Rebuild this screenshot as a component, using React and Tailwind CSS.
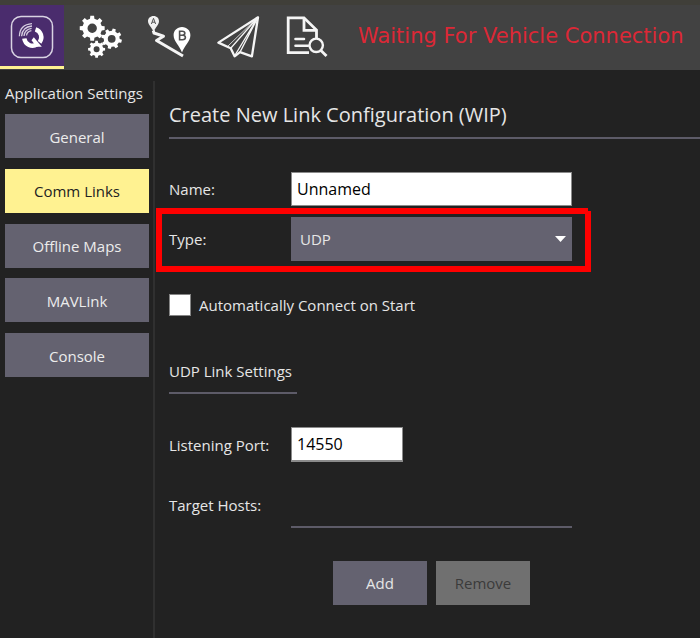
import React from 'react';

// Outline of a toothed wheel followed by its round hole (even-odd fill).
function gearPath(cx, cy, outer, root, hole, teeth, turn) {
  const step = (Math.PI * 2) / teeth;
  const pts = [];
  for (let i = 0; i < teeth; i++) {
    const a = turn + i * step;
    [[-0.29, root], [-0.19, outer], [0.19, outer], [0.29, root]].forEach(([k, r]) => {
      pts.push(`${(cx + r * Math.cos(a + k * step)).toFixed(2)} ${(cy + r * Math.sin(a + k * step)).toFixed(2)}`);
    });
  }
  return `M${pts.join('L')}Z M${cx - hole} ${cy}a${hole} ${hole} 0 1 0 ${hole * 2} 0a${hole} ${hole} 0 1 0 ${-hole * 2} 0Z`;
}

function LogoIcon() {
  return (
    <svg className="h-[44px] w-[44px]" viewBox="10 15 44 44" fill="none">
      <rect x="11.5" y="16.5" width="41" height="41" rx="9.5" stroke="#d9d3e3" strokeWidth="1.5" />
      <path d="M35.5 29.3A8.3 8.3 0 0 1 39.6 42.3M37 44.4A8.3 8.3 0 0 1 24.3 38.5" stroke="#fff" strokeWidth="4.4" />
      <path d="M33.8 37.2L41.8 46.8H36.4L31.5 40.2Z" fill="#fff" />
      <g stroke="#d5cde0" strokeWidth="1.3">
        <path d="M19.4 36.2C19.6 29 24 24.2 32 23.6" />
        <path d="M21.6 36.2C22 30.5 25.5 26.6 32 26" />
        <path d="M24 36C24.4 31.8 27 29 31.6 28.4" />
        <path d="M26.5 35.5C26.8 33 28.5 31.2 31.4 30.7" />
      </g>
    </svg>
  );
}

function GearsIcon() {
  return (
    <svg className="h-[44px] w-[44px]" viewBox="79 15 44 44" fill="#fff" fillRule="evenodd">
      <path d={gearPath(92.2, 28.2, 12.6, 9.8, 4.7, 8, 0)} />
      <path d={gearPath(111.7, 38.8, 10.3, 8, 3.9, 8, 0.25)} />
      <path d={gearPath(96.6, 49.3, 8.6, 6.7, 3, 8, 0)} />
    </svg>
  );
}

function PlanIcon() {
  return (
    <svg className="h-[46px] w-[46px]" viewBox="147 14 46 46" fill="none">
      <path d="M153.3 30.5L154 33L163.5 36.2L156.5 40.5L183 56" stroke="#f4f4f4" strokeWidth="3" strokeLinejoin="round" />
      <path d="M153.5 16C157 16 159 18.3 159 21.3C159 25 155.2 27.5 153.6 32C152 27.5 148 25 148 21.3C148 18.3 150.2 16 153.5 16Z" fill="#f1f1f1" />
      <path d="M151.4 24L153.5 18.3L155.6 24M152.1 22.2H155" stroke="#555" strokeWidth="1" />
      <path d="M182 27C187 27 190.4 30.6 190.4 35.3C190.4 41.5 184.5 45.5 182 52.5C179.5 45.5 173.6 41.5 173.6 35.3C173.6 30.6 177 27 182 27Z" fill="#fff" />
      <path d="M179.6 31.3H182.2C185.7 31.3 185.7 35.2 182.2 35.2H179.6H182.4C186.4 35.2 186.4 39.7 182.4 39.7H179.6Z" stroke="#505050" strokeWidth="1.6" />
    </svg>
  );
}

function PlaneIcon() {
  return (
    <svg className="h-[46px] w-[46px]" viewBox="215 14 46 46" fill="none" stroke="#f5f5f5" strokeLinejoin="round">
      <path d="M258 17.3L218.4 42.6L230.7 48.2L234.6 56.3L240 52.1L251.9 56.4Z" strokeWidth="2.3" />
      <path d="M258 17.3L230.7 48.2M258 17.3L234.8 55.5M258 17.3L240 52.1" strokeWidth="1.3" />
      <path d="M257 18L228 46" strokeWidth="0.8" />
    </svg>
  );
}

function AnalyzeIcon() {
  return (
    <svg className="h-[46px] w-[46px]" viewBox="284 14 46 46" fill="none" stroke="#f5f5f5">
      <path d="M309 52.7H288.2V17.8H304L316.5 30V38" strokeWidth="2.8" />
      <path d="M304 18V30.4H316" strokeWidth="2.8" />
      <path d="M295.5 39H304M295.5 45.8H308" strokeWidth="2.6" strokeLinecap="round" />
      <circle cx="316.2" cy="45.3" r="6.7" strokeWidth="2.4" />
      <path d="M320.7 50.2L326.5 56" strokeWidth="2.8" />
    </svg>
  );
}

const SECTIONS = ['General', 'Comm Links', 'Offline Maps', 'MAVLink', 'Console'];

export default function App() {
  return (
    <div className="flex h-[638px] w-[700px] flex-col overflow-hidden bg-[#222222] font-['Open_Sans','Noto_Sans',sans-serif] text-[15px] leading-5 text-[#e6e6e6]">
      <header className="flex h-[70px] shrink-0 border-t-[5px] border-[#403f39] bg-[#424242]">
        <button className="flex h-16 w-16 items-center justify-center border-b-[3px] border-[#fff291] bg-[#4a2c6d] pt-[3px]">
          <LogoIcon />
        </button>
        <div className="flex h-16 items-center">
          <button className="ml-[15px]"><GearsIcon /></button>
          <button className="ml-6"><PlanIcon /></button>
          <button className="ml-[22px]"><PlaneIcon /></button>
          <button className="ml-[23px]"><AnalyzeIcon /></button>
        </div>
        <p className="ml-[28px] pt-[16px] font-['DejaVu_Sans',sans-serif] text-[21px] leading-[30px] whitespace-nowrap text-[#dc2836]">
          Waiting For Vehicle Connection
        </p>
      </header>

      <div className="flex min-h-0 flex-1">
        <aside className="w-[153px] shrink-0 pt-[13px] pl-[5px]">
          <h2 className="whitespace-nowrap">Application Settings</h2>
          <nav className="mt-[11px] flex w-36 flex-col gap-[10.75px]">
            {SECTIONS.map((name) => (
              <button
                key={name}
                className={
                  name === 'Comm Links'
                    ? 'h-11 bg-[#fff291] pt-px text-[#222222]'
                    : 'h-11 bg-[#646270] pt-px text-[#ececec]'
                }
              >
                {name}
              </button>
            ))}
          </nav>
        </aside>
        <div className="mt-[11px] w-[2px] shrink-0 bg-[#303030]" />

        <main className="relative flex-1 pl-[14px]">
          <h1 className="mt-[30px] h-[39px] border-b-2 border-[#5d5b68] text-[20px] leading-[30px] whitespace-nowrap">
            Create New Link Configuration (WIP)
          </h1>

          <div className="mt-[33px] flex h-[34px] items-center">
            <label className="w-[122px]">Name:</label>
            <input className="h-[34px] w-[281px] border border-[#8b8b8b] bg-white px-[5px] text-[16px] text-black" defaultValue="Unnamed" />
          </div>
          <div className="mt-[11px] flex h-11 items-center">
            <label className="w-[122px]">Type:</label>
            <button className="flex h-11 w-[281px] items-center justify-between bg-[#646270] pr-[6px] pl-[9px]">
              <span>UDP</span>
              <svg className="h-[6px] w-[11px]" viewBox="0 0 11 6"><path d="M0 0H11L5.5 6Z" fill="#fff" /></svg>
            </button>
          </div>
          <label className="mt-[33px] flex h-[22px] items-center">
            <span className="mr-[8px] h-[22px] w-[22px] border border-[#858585] bg-white" />
            Automatically Connect on Start
          </label>

          <h3 className="mt-[45px] h-[33px] w-32 border-b-2 border-[#5d5b68] whitespace-nowrap">UDP Link Settings</h3>
          <div className="mt-[33px] flex h-[35px] items-center">
            <label className="w-[122px]">Listening Port:</label>
            <input className="h-[35px] w-[112px] border border-b-2 border-[#8b8b8b] bg-white px-[5px] text-[16px] text-black" defaultValue="14550" />
          </div>
          <div className="mt-[33px] flex h-[33px]">
            <label className="w-[122px]">Target Hosts:</label>
            <div className="w-[281px] border-b-2 border-[#5d5b68]" />
          </div>
          <div className="mt-[33px] ml-[164px] flex gap-[9px]">
            <button className="h-11 w-[94px] bg-[#646270]">Add</button>
            <button className="h-11 w-[94px] bg-[#707070] text-[#3b3b3b]" disabled>Remove</button>
          </div>

          <div className="pointer-events-none absolute top-[138px] left-px h-[64px] w-[435px] border-[6px] border-[#ff0000]">
            <span className="absolute -top-[6px] -right-[6px] h-[3px] w-[3px] bg-[#222222]" />
          </div>
        </main>
      </div>
    </div>
  );
}
